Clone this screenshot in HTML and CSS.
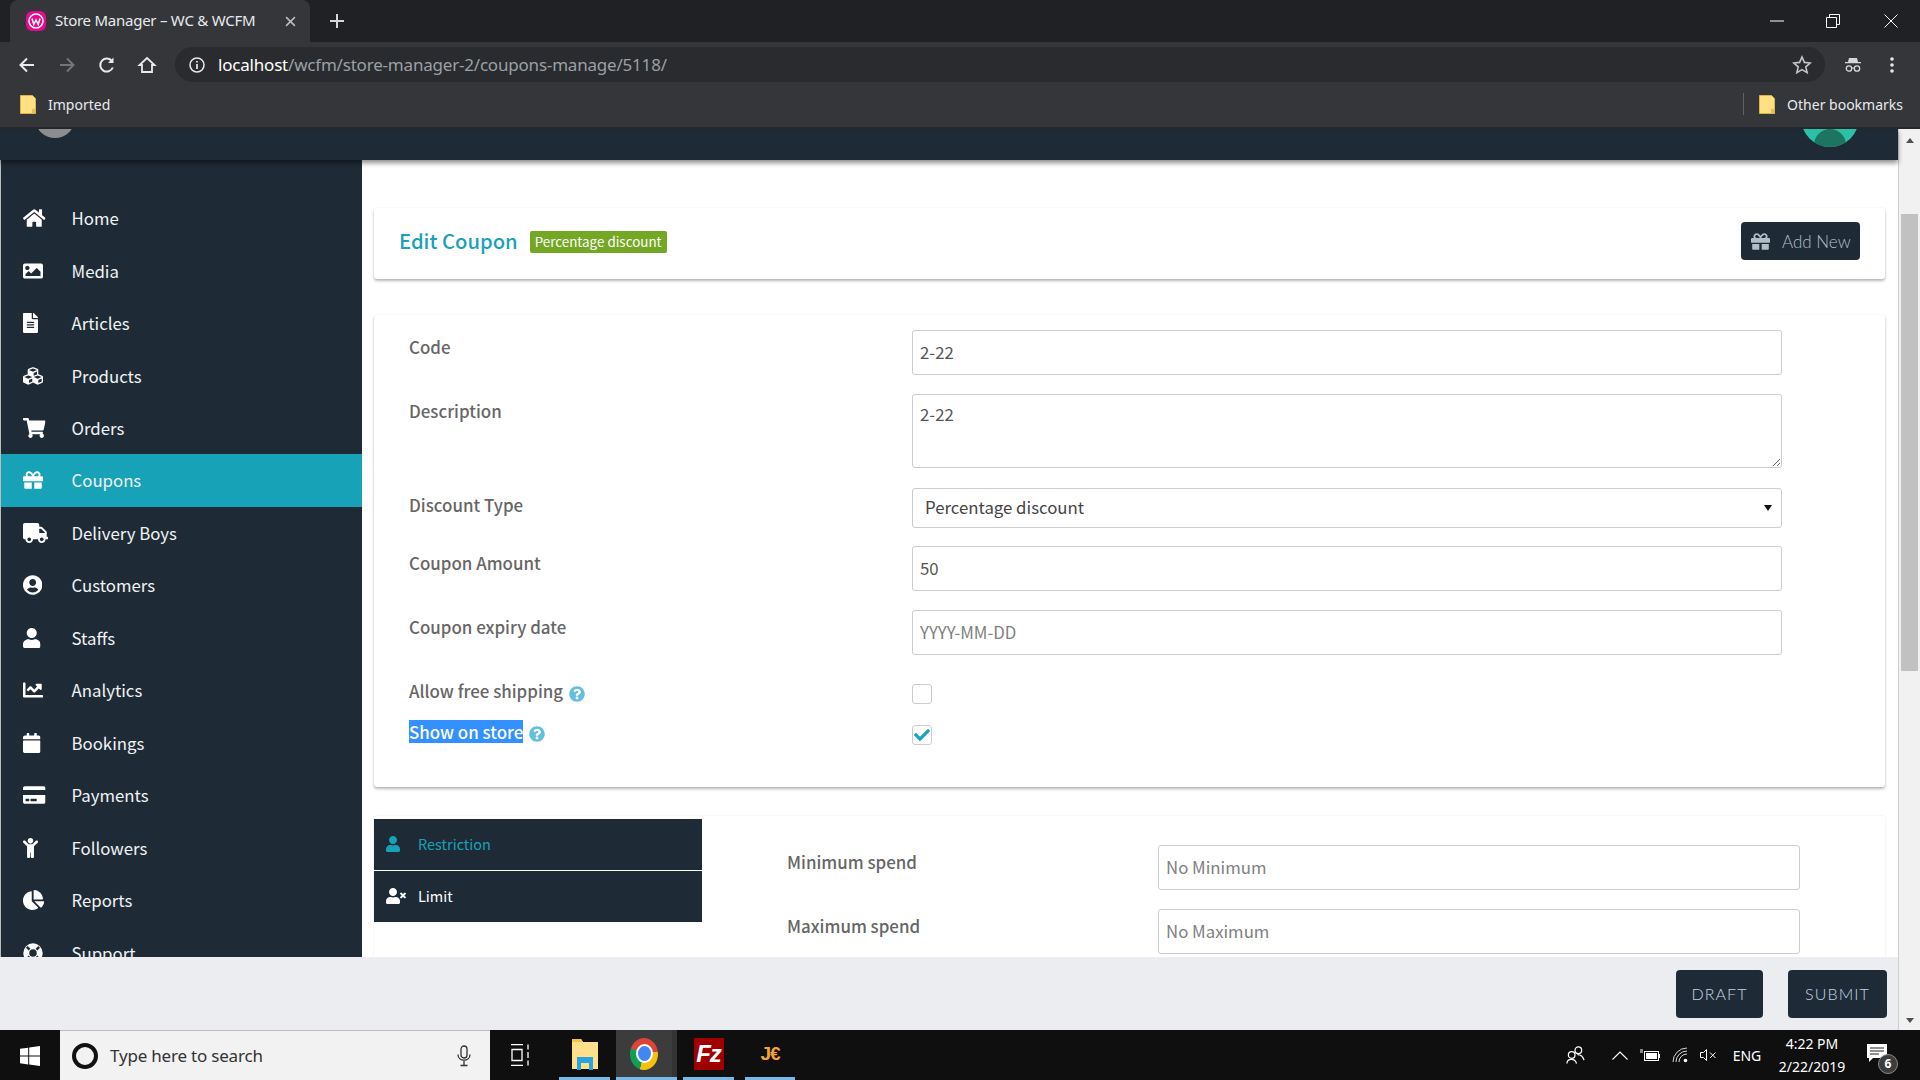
FILE: index.html
```html
<!DOCTYPE html>
<html lang="en">
<head>
<meta charset="utf-8">
<title>Store Manager – WC &amp; WCFM</title>
<link rel="stylesheet" href="styles.css">
</head>
<body>
<svg class="sprite" xmlns="http://www.w3.org/2000/svg">
<symbol id="i-home" viewBox="0 0 576 512"><path d="M280.37 148.26L96 300.11V464a16 16 0 0 0 16 16l112.06-.29a16 16 0 0 0 15.92-16V368a16 16 0 0 1 16-16h64a16 16 0 0 1 16 16v95.64a16 16 0 0 0 16 16.05L464 480a16 16 0 0 0 16-16V300L295.67 148.26a12.19 12.19 0 0 0-15.3 0zM571.6 251.47L488 182.56V44.05a12 12 0 0 0-12-12h-56a12 12 0 0 0-12 12v72.61L318.47 43a48 48 0 0 0-61 0L4.34 251.47a12 12 0 0 0-1.6 16.9l25.5 31A12 12 0 0 0 45.15 301l235.22-193.74a12.19 12.19 0 0 1 15.3 0L530.9 301a12 12 0 0 0 16.9-1.6l25.5-31a12 12 0 0 0-1.7-16.93z"/></symbol>
<symbol id="i-image" viewBox="0 0 512 512"><path d="M464 448H48c-26.51 0-48-21.49-48-48V112c0-26.51 21.49-48 48-48h416c26.51 0 48 21.49 48 48v288c0 26.51-21.49 48-48 48zM112 120c-30.928 0-56 25.072-56 56s25.072 56 56 56 56-25.072 56-56-25.072-56-56-56zM64 384h384V272l-87.515-87.515c-4.686-4.686-12.284-4.686-16.971 0L208 320l-55.515-55.515c-4.686-4.686-12.284-4.686-16.971 0L64 336v48z"/></symbol>
<symbol id="i-file" viewBox="0 0 384 512"><path d="M224 136V0H24C10.7 0 0 10.7 0 24v464c0 13.3 10.7 24 24 24h336c13.3 0 24-10.7 24-24V160H248c-13.2 0-24-10.8-24-24zm64 236c0 6.6-5.4 12-12 12H108c-6.6 0-12-5.4-12-12v-8c0-6.6 5.4-12 12-12h168c6.6 0 12 5.4 12 12v8zm0-64c0 6.6-5.4 12-12 12H108c-6.6 0-12-5.4-12-12v-8c0-6.6 5.4-12 12-12h168c6.6 0 12 5.4 12 12v8zm0-72v8c0 6.6-5.4 12-12 12H108c-6.6 0-12-5.4-12-12v-8c0-6.6 5.4-12 12-12h168c6.6 0 12 5.4 12 12zm96-114.1v6.1H256V0h6.1c6.4 0 12.5 2.5 17 7l97.9 98c4.5 4.5 7 10.6 7 16.9z"/></symbol>
<symbol id="i-cubes" viewBox="0 0 512 512"><path d="M488.6 250.2L392 214V105.5c0-15-9.3-28.4-23.4-33.7l-100-37.5c-8.1-3.1-17.1-3.1-25.3 0l-100 37.5c-14.1 5.3-23.4 18.7-23.4 33.7V214l-96.6 36.2C9.3 255.5 0 268.9 0 283.9V394c0 13.6 7.7 26.1 19.9 32.2l100 50c10.1 5.1 22.1 5.1 32.2 0l103.9-52 103.9 52c10.1 5.1 22.1 5.1 32.2 0l100-50c12.2-6.1 19.9-18.6 19.9-32.2V283.9c0-15-9.3-28.4-23.4-33.7zM358 214.8l-85 31.9v-68.2l85-37v73.3zM154 104.1l102-38.2 102 38.2v.6l-102 41.4-102-41.4v-.6zm84 291.1l-85 42.5v-79.1l85-38.8v75.4zm0-112l-102 41.4-102-41.4v-.6l102-38.2 102 38.2v.6zm240 112l-85 42.5v-79.1l85-38.8v75.4zm0-112l-102 41.4-102-41.4v-.6l102-38.2 102 38.2v.6z"/></symbol>
<symbol id="i-cart" viewBox="0 0 576 512"><path d="M528.12 301.319l47.273-208C578.806 78.301 567.391 64 551.99 64H159.208l-9.166-44.81C147.758 8.021 137.93 0 126.529 0H24C10.745 0 0 10.745 0 24v16c0 13.255 10.745 24 24 24h69.883l70.248 343.435C147.325 417.1 136 435.222 136 456c0 30.928 25.072 56 56 56s56-25.072 56-56c0-15.674-6.447-29.835-16.824-40h209.647C430.447 426.165 424 440.326 424 456c0 30.928 25.072 56 56 56s56-25.072 56-56c0-22.172-12.888-41.332-31.579-50.405l5.517-24.276c3.413-15.018-8.002-29.319-23.403-29.319H218.117l-6.545-32h293.145c11.206 0 20.92-7.754 23.403-18.681z"/></symbol>
<symbol id="i-gift" viewBox="0 0 512 512"><path d="M32 448c0 17.7 14.3 32 32 32h160V320H32v128zm256 32h160c17.7 0 32-14.3 32-32V320H288v160zm192-320h-42.1c6.2-12.1 10.1-25.5 10.1-40 0-48.5-39.5-88-88-88-41.6 0-68.5 21.3-103 68.3-34.5-47-61.4-68.3-103-68.3-48.5 0-88 39.5-88 88 0 14.5 3.8 27.9 10.1 40H32c-17.7 0-32 14.3-32 32v80c0 8.8 7.2 16 16 16h480c8.8 0 16-7.2 16-16v-80c0-17.7-14.3-32-32-32zm-326.1 0c-22.1 0-40-17.9-40-40s17.9-40 40-40c19.9 0 34.6 3.3 86.1 80h-86.1zm206.1 0h-86.1c51.4-76.5 65.7-80 86.1-80 22.1 0 40 17.9 40 40s-17.9 40-40 40z"/></symbol>
<symbol id="i-truck" viewBox="0 0 640 512"><path d="M624 352h-16V243.9c0-12.7-5.1-24.9-14.1-33.9L494 110.1c-9-9-21.2-14.1-33.9-14.1H416V48c0-26.5-21.5-48-48-48H48C21.5 0 0 21.5 0 48v320c0 26.5 21.5 48 48 48h16c0 53 43 96 96 96s96-43 96-96h128c0 53 43 96 96 96s96-43 96-96h48c8.8 0 16-7.2 16-16v-32c0-8.8-7.2-16-16-16zM160 464c-26.5 0-48-21.5-48-48s21.5-48 48-48 48 21.5 48 48-21.5 48-48 48zm320 0c-26.5 0-48-21.5-48-48s21.5-48 48-48 48 21.5 48 48-21.5 48-48 48zm80-208H416V144h44.1l99.9 99.9V256z"/></symbol>
<symbol id="i-ucircle" viewBox="0 0 496 512"><path d="M248 8C111 8 0 119 0 256s111 248 248 248 248-111 248-248S385 8 248 8zm0 96c48.6 0 88 39.4 88 88s-39.4 88-88 88-88-39.4-88-88 39.4-88 88-88zm0 344c-58.7 0-111.3-26.6-146.5-68.2 18.8-35.4 55.6-59.8 98.5-59.8 2.4 0 4.8.4 7.1 1.1 13 4.2 26.6 6.9 40.9 6.9 14.3 0 28-2.7 40.9-6.9 2.3-.7 4.7-1.1 7.1-1.1 42.9 0 79.7 24.4 98.5 59.8C359.3 421.4 306.7 448 248 448z"/></symbol>
<symbol id="i-user" viewBox="0 0 448 512"><path d="M224 256c70.7 0 128-57.3 128-128S294.7 0 224 0 96 57.3 96 128s57.3 128 128 128zm89.6 32h-16.7c-22.2 10.2-46.9 16-72.9 16s-50.6-5.8-72.9-16h-16.7C60.2 288 0 348.2 0 422.4V464c0 26.5 21.5 48 48 48h352c26.5 0 48-21.5 48-48v-41.6c0-74.2-60.2-134.4-134.4-134.4z"/></symbol>
<symbol id="i-chart" viewBox="0 0 512 512"><path d="M496 384H64V80c0-8.84-7.16-16-16-16H16C7.16 64 0 71.16 0 80v336c0 17.67 14.33 32 32 32h464c8.84 0 16-7.16 16-16v-32c0-8.84-7.16-16-16-16zM464 96H345.94c-21.38 0-32.09 25.85-16.97 40.97l32.4 32.4L288 242.75l-73.37-73.37c-12.5-12.5-32.76-12.5-45.25 0l-68.69 68.69c-6.25 6.25-6.25 16.38 0 22.63l22.62 22.62c6.25 6.25 16.38 6.25 22.63 0L192 237.25l73.37 73.37c12.5 12.5 32.76 12.5 45.25 0l96-96 32.4 32.4c15.12 15.12 40.97 4.41 40.97-16.97V112c.01-8.84-7.15-16-15.99-16z"/></symbol>
<symbol id="i-cal" viewBox="0 0 448 512"><path d="M12 192h424c6.6 0 12 5.4 12 12v260c0 26.5-21.5 48-48 48H48c-26.5 0-48-21.5-48-48V204c0-6.6 5.4-12 12-12zm436-44v-36c0-26.5-21.5-48-48-48h-48V12c0-6.6-5.4-12-12-12h-40c-6.6 0-12 5.4-12 12v52H160V12c0-6.6-5.4-12-12-12h-40c-6.6 0-12 5.4-12 12v52H48C21.5 64 0 85.5 0 112v36c0 6.6 5.4 12 12 12h424c6.6 0 12-5.4 12-12z"/></symbol>
<symbol id="i-card" viewBox="0 0 576 512"><path d="M0 432c0 26.5 21.5 48 48 48h480c26.5 0 48-21.5 48-48V256H0v176zm192-68c0-6.6 5.4-12 12-12h136c6.6 0 12 5.4 12 12v40c0 6.6-5.4 12-12 12H204c-6.6 0-12-5.4-12-12v-40zm-128 0c0-6.6 5.4-12 12-12h72c6.6 0 12 5.4 12 12v40c0 6.6-5.4 12-12 12H76c-6.6 0-12-5.4-12-12v-40zM576 80v48H0V80c0-26.5 21.5-48 48-48h480c26.5 0 48 21.5 48 48z"/></symbol>
<symbol id="i-child" viewBox="0 0 384 512"><path d="M120 72c0-39.765 32.235-72 72-72s72 32.235 72 72c0 39.764-32.235 72-72 72s-72-32.236-72-72zm254.627 1.373c-12.496-12.497-32.758-12.497-45.254 0L242.745 160H141.254L54.627 73.373c-12.496-12.497-32.758-12.497-45.254 0-12.497 12.497-12.497 32.758 0 45.255L104 213.254V480c0 17.673 14.327 32 32 32h16c17.673 0 32-14.327 32-32V368h16v112c0 17.673 14.327 32 32 32h16c17.673 0 32-14.327 32-32V213.254l94.627-94.627c12.497-12.497 12.497-32.757 0-45.254z"/></symbol>
<symbol id="i-pie" viewBox="0 0 544 512"><path d="M527.79 288H290.5l158.03 158.03c6.04 6.04 15.98 6.53 22.19.68 38.7-36.46 65.32-85.61 73.13-140.86 1.34-9.46-6.51-17.85-16.06-17.85zm-15.83-64.8C503.72 103.74 408.26 8.28 288.8.04 279.68-.59 272 7.1 272 16.24V240h223.77c9.14 0 16.82-7.68 16.19-16.8zM224 288V50.71c0-9.55-8.39-17.4-17.84-16.06C86.99 51.49-4.1 155.6.14 280.37 4.5 408.51 114.83 513.59 243.03 511.98c50.4-.63 96.97-16.87 135.26-44.03 7.9-5.6 8.42-17.23 1.57-24.08L224 288z"/></symbol>
<symbol id="i-ring" viewBox="0 0 512 512"><path fill-rule="evenodd" d="M256 8a248 248 0 1 1 0 496 248 248 0 0 1 0-496zM256 160a96 96 0 1 0 0 192 96 96 0 0 0 0-192zM120 76l-44 44 70 70 44-44zM392 76l-70 70 44 44 70-70zM146 322l-70 70 44 44 70-70zM366 322l-44 44 70 70 44-44z"/></symbol>
<symbol id="i-utimes" viewBox="0 0 640 512"><path d="M589.6 240l45.6-45.6c6.3-6.3 6.3-16.5 0-22.8l-22.8-22.8c-6.3-6.3-16.5-6.3-22.8 0L544 194.4l-45.6-45.6c-6.3-6.3-16.5-6.3-22.8 0l-22.8 22.8c-6.3 6.3-6.3 16.5 0 22.8l45.6 45.6-45.6 45.6c-6.3 6.3-6.3 16.5 0 22.8l22.8 22.8c6.3 6.3 16.5 6.3 22.8 0l45.6-45.6 45.6 45.6c6.3 6.3 16.5 6.3 22.8 0l22.8-22.8c6.3-6.3 6.3-16.5 0-22.8L589.6 240zM224 256c70.7 0 128-57.3 128-128S294.7 0 224 0 96 57.3 96 128s57.3 128 128 128zm89.6 32h-16.7c-22.2 10.2-46.9 16-72.9 16s-50.6-5.8-72.9-16h-16.7C60.2 288 0 348.2 0 422.4V464c0 26.5 21.5 48 48 48h352c26.5 0 48-21.5 48-48v-41.6c0-74.2-60.2-134.4-134.4-134.4z"/></symbol>
<symbol id="i-help" viewBox="0 0 512 512"><path d="M504 256c0 136.997-111.043 248-248 248S8 392.997 8 256C8 119.083 119.043 8 256 8s248 111.083 248 248zM262.655 90c-54.497 0-89.255 22.957-116.549 63.758-3.536 5.286-2.353 12.415 2.715 16.258l34.699 26.31c5.205 3.947 12.621 3.008 16.665-2.122 17.864-22.658 30.113-35.797 57.303-35.797 20.429 0 45.698 13.148 45.698 32.958 0 14.976-12.363 22.667-32.534 33.976C247.128 238.528 216 254.941 216 296v4c0 6.627 5.373 12 12 12h56c6.627 0 12-5.373 12-12v-1.333c0-28.462 83.186-29.647 83.186-106.667 0-58.002-60.165-102-116.531-102zM256 338c-25.365 0-46 20.635-46 46 0 25.364 20.635 46 46 46s46-20.636 46-46c0-25.365-20.635-46-46-46z"/></symbol>
<symbol id="i-check" viewBox="0 0 512 512"><path d="M173.898 439.404l-166.4-166.4c-9.997-9.997-9.997-26.206 0-36.204l36.203-36.204c9.997-9.998 26.207-9.998 36.204 0L192 312.69 432.095 72.596c9.997-9.997 26.207-9.997 36.204 0l36.203 36.204c9.997 9.997 9.997 26.206 0 36.204l-294.4 294.401c-9.998 9.997-26.207 9.997-36.204-.001z"/></symbol>
<symbol id="i-folder" viewBox="0 0 16 19"><path d="M.5.5h12l3 3v15H.5z" fill="#ffe082" stroke="#d9b44a"/><path d="M12 14h3.500v4.500H12z" fill="#e6bf55"/></symbol>
</svg>

<header class="tabstrip">
  <div class="tab">
    <svg class="favicon" viewBox="0 0 20 20"><rect width="20" height="20" rx="6" fill="#e6098f"/><circle cx="10" cy="10" r="7" fill="none" stroke="#fff" stroke-width="1.500"/><path d="M6 7.500l1.800 6 2.200-4.500 2.200 4.500 1.800-6" fill="none" stroke="#fff" stroke-width="1.500"/></svg>
    <span class="tab-title">Store Manager – WC &amp; WCFM</span>
    <svg class="tab-close" viewBox="0 0 10 10"><path d="M1 1l8 8M9 1l-8 8" stroke="#b9bcc0" stroke-width="1.400"/></svg>
  </div>
  <svg class="newtab" viewBox="0 0 16 16"><path d="M8 1v14M1 8h14" stroke="#d5d7da" stroke-width="2"/></svg>
  <div class="winctl">
    <svg class="win-min" viewBox="0 0 14 14"><path d="M0 7h14" stroke="#fff"/></svg>
    <svg viewBox="0 0 14 14"><path d="M.5 3.500h10v10H.5zM3.500 3.500v-3h10v10h-3" fill="none" stroke="#fff"/></svg>
    <svg viewBox="0 0 14 14"><path d="M.5.5l13 13M13.500.5l-13 13" stroke="#fff"/></svg>
  </div>
</header>

<nav class="toolbar">
  <svg class="tb-ic" viewBox="0 0 20 20"><path d="M17 10H4M10 3.500L3.500 10l6.500 6.500" fill="none" stroke="#e8eaed" stroke-width="2"/></svg>
  <svg class="tb-ic" viewBox="0 0 20 20"><path d="M3 10h13M10 3.500l6.500 6.500-6.500 6.500" fill="none" stroke="#72757a" stroke-width="2"/></svg>
  <svg class="tb-ic" viewBox="0 0 20 20"><path d="M15.800 12.500A6.500 6.500 0 1 1 15 6.200" fill="none" stroke="#e8eaed" stroke-width="2"/><path d="M16.500 2.500V8H11z" fill="#e8eaed"/></svg>
  <svg class="tb-ic" viewBox="0 0 20 20"><path d="M10 3l7.500 7H15v7H5v-7H2.500z" fill="none" stroke="#e8eaed" stroke-width="1.800"/></svg>
  <div class="omnibox">
    <svg class="info" viewBox="0 0 16 16"><circle cx="8" cy="8" r="7" fill="none" stroke="#e8eaed" stroke-width="1.500"/><path d="M8 7v5M8 4v1.600" stroke="#e8eaed" stroke-width="1.700"/></svg>
    <span class="url"><span class="host">localhost</span>/wcfm/store-manager-2/coupons-manage/5118/</span>
    <svg class="star" viewBox="0 0 20 20"><path d="M10 2l2.400 5.400 5.800.6-4.400 3.900 1.300 5.700-5.100-3-5.100 3 1.300-5.700L1.800 8l5.800-.6z" fill="none" stroke="#c4c7ca" stroke-width="1.600"/></svg>
  </div>
  <svg class="incog" viewBox="0 0 18 16"><path d="M5 1h8l1 4h3v1.300H1V5h3z" fill="#d5d7da"/><circle cx="5" cy="11.500" r="2.700" fill="none" stroke="#d5d7da" stroke-width="1.300"/><circle cx="13" cy="11.500" r="2.700" fill="none" stroke="#d5d7da" stroke-width="1.300"/><path d="M7.700 11h2.600" stroke="#d5d7da"/></svg>
  <svg class="dots" viewBox="0 0 4 16"><circle cx="2" cy="2" r="1.800" fill="#e8eaed"/><circle cx="2" cy="8" r="1.800" fill="#e8eaed"/><circle cx="2" cy="14" r="1.800" fill="#e8eaed"/></svg>
</nav>

<nav class="bookmarks">
  <svg class="bm-folder"><use href="#i-folder"/></svg>
  <span class="bm-text">Imported</span>
  <span class="bm-sep"></span>
  <svg class="bm-folder"><use href="#i-folder"/></svg>
  <span class="bm-text">Other bookmarks</span>
</nav>

<div class="viewport">
  <div class="page">
    <div class="topbar">
      <span class="avatar avatar-left"></span>
      <span class="avatar avatar-right"><span class="avatar-figure"></span></span>
    </div>
    <div class="workspace">
      <aside class="sidebar">
        <a class="nav-item"><span class="nav-ic"><svg viewBox="0 0 576 512"><use href="#i-home"/></svg></span>Home</a>
        <a class="nav-item"><span class="nav-ic"><svg viewBox="0 0 512 512"><use href="#i-image"/></svg></span>Media</a>
        <a class="nav-item"><span class="nav-ic"><svg viewBox="0 0 384 512"><use href="#i-file"/></svg></span>Articles</a>
        <a class="nav-item"><span class="nav-ic"><svg viewBox="0 0 512 512"><use href="#i-cubes"/></svg></span>Products</a>
        <a class="nav-item"><span class="nav-ic"><svg viewBox="0 0 576 512"><use href="#i-cart"/></svg></span>Orders</a>
        <a class="nav-item active"><span class="nav-ic"><svg viewBox="0 0 512 512"><use href="#i-gift"/></svg></span>Coupons</a>
        <a class="nav-item"><span class="nav-ic"><svg viewBox="0 0 640 512"><use href="#i-truck"/></svg></span>Delivery Boys</a>
        <a class="nav-item"><span class="nav-ic"><svg viewBox="0 0 496 512"><use href="#i-ucircle"/></svg></span>Customers</a>
        <a class="nav-item"><span class="nav-ic"><svg viewBox="0 0 448 512"><use href="#i-user"/></svg></span>Staffs</a>
        <a class="nav-item"><span class="nav-ic"><svg viewBox="0 0 512 512"><use href="#i-chart"/></svg></span>Analytics</a>
        <a class="nav-item"><span class="nav-ic"><svg viewBox="0 0 448 512"><use href="#i-cal"/></svg></span>Bookings</a>
        <a class="nav-item"><span class="nav-ic"><svg viewBox="0 0 576 512"><use href="#i-card"/></svg></span>Payments</a>
        <a class="nav-item"><span class="nav-ic"><svg viewBox="0 0 384 512"><use href="#i-child"/></svg></span>Followers</a>
        <a class="nav-item"><span class="nav-ic"><svg viewBox="0 0 544 512"><use href="#i-pie"/></svg></span>Reports</a>
        <a class="nav-item"><span class="nav-ic"><svg viewBox="0 0 512 512"><use href="#i-ring"/></svg></span>Support</a>
      </aside>
      <main class="main">
        <section class="card head-card">
          <div class="head-left">
            <h1 class="title">Edit Coupon</h1>
            <span class="badge">Percentage discount</span>
          </div>
          <a class="btn-add"><svg viewBox="0 0 512 512"><use href="#i-gift"/></svg>Add New</a>
        </section>
        <section class="card form-card">
          <div class="row"><label class="lbl">Code</label><input class="field" type="text" value="2-22"></div>
          <div class="row mt19"><label class="lbl">Description</label><textarea class="field area">2-22</textarea></div>
          <div class="row mt20"><label class="lbl">Discount Type</label><span class="sel-wrap"><select class="field sel"><option>Percentage discount</option></select></span></div>
          <div class="row mt18"><label class="lbl">Coupon Amount</label><input class="field" type="text" value="50"></div>
          <div class="row mt19"><label class="lbl">Coupon expiry date</label><input class="field" type="text" placeholder="YYYY-MM-DD"></div>
          <div class="row row-check mt29"><label class="lbl lbl-check lift3">Allow free shipping<svg class="help" viewBox="0 0 512 512"><use href="#i-help"/></svg></label><span class="checkbox"></span></div>
          <div class="row row-check mt21"><label class="lbl lbl-check lift4"><span class="selected">Show on store</span><svg class="help" viewBox="0 0 512 512"><use href="#i-help"/></svg></label><span class="checkbox"><svg viewBox="0 0 512 512"><use href="#i-check"/></svg></span></div>
        </section>
        <section class="card tab-card">
          <div class="tabs">
            <a class="tab-link on"><span class="tab-ic"><svg viewBox="0 0 448 512"><use href="#i-user"/></svg></span>Restriction</a>
            <a class="tab-link"><span class="tab-ic"><svg viewBox="0 0 640 512"><use href="#i-utimes"/></svg></span>Limit</a>
          </div>
          <div class="tab-body">
            <div class="row2"><label class="lbl lbl2">Minimum spend</label><input class="field field2" type="text" placeholder="No Minimum"></div>
            <div class="row2"><label class="lbl lbl2">Maximum spend</label><input class="field field2" type="text" placeholder="No Maximum"></div>
          </div>
        </section>
      </main>
    </div>
    <footer class="actions">
      <a class="btn-act btn-draft">DRAFT</a>
      <a class="btn-act btn-submit">SUBMIT</a>
    </footer>
  </div>
  <div class="scrollbar">
    <span class="arrow-up"></span>
    <span class="thumb"></span>
    <span class="arrow-down"></span>
  </div>
</div>

<footer class="taskbar">
  <div class="start">
    <svg viewBox="0 0 20 20"><path d="M0 2.800l8.200-1.100v7.900H0zM9.200 1.500L20 0v9.600H9.200zM0 10.600h8.200v7.900L0 17.200zM9.200 10.600H20V20L9.200 18.500z" fill="#fff"/></svg>
  </div>
  <div class="search">
    <span class="cortana"></span>
    <span class="search-text">Type here to search</span>
    <svg class="mic" viewBox="0 0 14 22"><rect x="4" y="1" width="6" height="12" rx="3" fill="none" stroke="#333" stroke-width="1.300"/><path d="M1 9.500c0 7.500 12 7.500 12 0M7 16v4M3.500 20.500h7" fill="none" stroke="#333" stroke-width="1.300"/></svg>
  </div>
  <div class="taskview">
    <svg viewBox="0 0 22 22"><path d="M1 .5h12M1 21.500h12M2 5.500h10v11H2zM18 .5v5M18 8v6M18 16.500v5" fill="none" stroke="#fff" stroke-width="1.300"/></svg>
  </div>
  <div class="app app-explorer">
    <svg viewBox="0 0 28 32"><path d="M1 1h9l2 3h15v27H1z" fill="#ffe08a"/><path d="M1 1h9l2 3H1z" fill="#f4c542"/><path d="M6 19h16v13h-4v-7h-8v7H6z" fill="#2aa4e0"/></svg>
  </div>
  <div class="app app-chrome"><span class="chrome-logo"></span></div>
  <div class="app app-fz"><span class="fz-logo">Fz</span></div>
  <div class="app app-je"><span class="je-logo">J€</span></div>
  <div class="tray">
    <span class="slot slot-people"><svg viewBox="0 0 20 20"><circle cx="6" cy="10" r="3.500" fill="none" stroke="#fff" stroke-width="1.300"/><circle cx="13" cy="5" r="3.500" fill="none" stroke="#fff" stroke-width="1.300"/><path d="M1 19c0-6 9-6 10 0M12 9.500c3 0 6 2 7 6" fill="none" stroke="#fff" stroke-width="1.300"/></svg></span>
    <span class="slot slot-chev"><svg viewBox="0 0 16 9"><path d="M.5 8.500L8 1l7.500 7.500" fill="none" stroke="#fff" stroke-width="1.200"/></svg></span>
    <span class="slot slot-batt"><svg viewBox="0 0 20 12"><path d="M0 1h3M0 3h3" stroke="#fff"/><rect x="4.500" y="2.500" width="14" height="9" fill="none" stroke="#fff"/><rect x="6" y="4" width="11" height="6" fill="#fff"/><path d="M19 5h1v4h-1z" fill="#fff"/></svg></span>
    <span class="slot slot-wifi"><svg viewBox="0 0 16 16"><path d="M1 15a14 14 0 0 1 14-14M4 15a11 11 0 0 1 11-11M7 15a8 8 0 0 1 8-8" fill="none" stroke="#d8d8d8"/><circle cx="13.500" cy="13.500" r="1.800" fill="#fff"/></svg></span>
    <span class="slot slot-vol"><svg viewBox="0 0 18 12"><path d="M.5 3.500h3l3-3v11l-3-3h-3z" fill="none" stroke="#fff"/><path d="M10 3.500l5.500 5.500M15.500 3.500L10 9" stroke="#fff"/></svg></span>
    <span class="slot slot-eng">ENG</span>
    <span class="slot slot-clock"><span>4:22 PM</span><span>2/22/2019</span></span>
    <span class="slot slot-note">
      <svg viewBox="0 0 20 18"><path d="M0 0h20v14H6l-4 4v-4H0z" fill="#fff"/><path d="M3 4h14M3 7h14M3 10h9" stroke="#222"/></svg>
      <span class="note-badge">6</span>
    </span>
  </div>
</footer>
</body>
</html>
```

FILE: styles.css
```css
* { box-sizing: border-box; }
html, body { margin: 0; padding: 0; height: 100%; overflow: hidden; }
body {
  display: flex;
  flex-direction: column;
  width: 1920px;
  height: 1080px;
  font-family: "Noto Sans CJK SC", "Noto Sans", sans-serif;
  background: #fff;
}
.sprite { display: none; }
a { color: inherit; text-decoration: none; }

/* browser chrome */
.tabstrip {
  height: 42px;
  flex: none;
  background: #202124;
  display: flex;
  align-items: flex-end;
  padding-left: 10px;
  font-family: "Noto Sans", sans-serif;
}
.tab {
  width: 300px;
  height: 42px;
  background: #35363a;
  border-radius: 8px 8px 0 0;
  display: flex;
  align-items: center;
  padding-left: 16px;
}
.favicon { width: 20px; height: 20px; flex: none; }
.tab-title { margin-left: 9px; color: #e8eaed; font-size: 15px; letter-spacing: -.25px; width: 230px; white-space: nowrap; margin-top: -2px; }
.tab-close { width: 11px; height: 11px; }
.newtab { width: 16px; height: 16px; margin: 0 0 13px 19px; }
.winctl { margin-left: auto; display: flex; align-self: flex-start; gap: 44px; padding: 14px 22px 0 0; }
.winctl svg { width: 14px; height: 14px; }
.winctl .win-min { margin-right: -2px; }

.toolbar {
  height: 40px;
  flex: none;
  background: #35363a;
  display: flex;
  align-items: flex-start;
  font-family: "Noto Sans", sans-serif;
  padding: 5px 0 0 17px;
}
.tb-ic { width: 20px; height: 20px; margin: 8px 20px 0 0; flex: none; }
.omnibox {
  margin-left: -2px;
  width: 1650px;
  height: 35px;
  background: #292b2e;
  border-radius: 18px;
  display: flex;
  align-items: center;
  padding-left: 14px;
}
.info { width: 16px; height: 16px; flex: none; }
.url { margin-left: 13px; font-size: 17px; color: #9aa0a6; letter-spacing: -.2px; white-space: nowrap; }
.host { color: #fff; }
.star { width: 20px; height: 20px; margin-left: auto; margin-right: 13px; }
.incog { width: 18px; height: 16px; margin: 10px 0 0 19px; }
.dots { width: 4px; height: 16px; margin: 10px 0 0 28px; }

.bookmarks {
  height: 47px;
  flex: none;
  background: #35363a;
  border-bottom: 2px solid #27282b;
  display: flex;
  align-items: center;
  padding: 0 17px 1px 20px;
  font-family: "Noto Sans", sans-serif;
  color: #e8eaed;
  font-size: 14px;
}
.bm-folder { width: 16px; height: 19px; flex: none; }
.bm-text { margin-left: 12px; white-space: nowrap; }
.bm-sep { width: 1px; height: 22px; background: #5f6368; margin: 0 15px 0 auto; }

/* page */
.viewport { flex: 1; min-height: 0; display: flex; }
.page { width: 1898px; display: flex; flex-direction: column; min-height: 0; }
.topbar {
  height: 31px;
  flex: none;
  background: #1e2b37;
  display: flex;
  justify-content: space-between;
  align-items: flex-end;
  overflow: hidden;
  padding: 0 39px 0 35px;
  box-shadow: 0 3px 5px rgba(0,0,0,.45);
  position: relative;
  z-index: 2;
}
.avatar { display: block; border-radius: 50%; flex: none; position: relative; overflow: hidden; }
.avatar-left { width: 40px; height: 40px; background: #8b8d8f; margin-bottom: 22px; }
.avatar-right { width: 58px; height: 58px; background: #2ac1a6; margin-bottom: 13px; }
.avatar-figure { display: block; position: absolute; left: 13px; bottom: -14px; width: 32px; height: 32px; background: #1b7560; border-radius: 50%; }

.workspace { flex: 1; min-height: 0; display: flex; border-left: 1px solid #bcbcbc; }
.sidebar {
  width: 361px;
  flex: none;
  background: #1e2b37;
  padding-top: 32px;
  overflow: hidden;
  color: #f1f3f4;
  font-size: 16.8px;
}
.nav-item { display: flex; align-items: center; height: 52.46px; padding-left: 22px; white-space: nowrap; }
.nav-item.active { background: #17a2b8; }
.nav-ic { width: 48.5px; flex: none; display: flex; align-items: center; }
.nav-ic svg { height: 20px; width: auto; fill: #fff; }
.main { flex: 1; min-width: 0; overflow: hidden; padding: 48px 13px 0 12px; background: #fff; }
.card { background: #fff; border-radius: 3px; box-shadow: 0 2px 3px rgba(0,0,0,.28), 0 0 2px rgba(0,0,0,.06); }

.head-card { height: 71px; display: flex; align-items: center; justify-content: space-between; padding: 0 25px 0 25px; }
.head-left { display: flex; align-items: center; margin-bottom: 6px; }
.title { margin: 0; font-size: 20.2px; font-weight: 500; color: #17a2b8; line-height: 30px; }
.badge { margin: 2px 0 0 12px; background: #73a724; color: #fff; font-size: 13.4px; height: 22px; line-height: 21px; padding: 0 5px; border-radius: 2px; white-space: nowrap; }
.btn-add { width: 119px; height: 38px; margin-bottom: 5px; background: #1e2b37; border-radius: 4px; color: #b0bec5; display: flex; align-items: center; padding-left: 10px; font-family: Lato, sans-serif; font-size: 17px; font-weight: 300; white-space: nowrap; }
.btn-add svg { width: 19px; height: 19px; fill: #b0bec5; margin-right: 12px; flex: none; }

.form-card { height: 472px; margin-top: 36px; padding: 15px 0 0 35px; }
.row { display: flex; align-items: flex-start; }
.row-check { align-items: center; height: 20px; }
.mt18 { margin-top: 18px; }
.mt19 { margin-top: 19px; }
.mt20 { margin-top: 20px; }
.mt21 { margin-top: 21px; }
.mt29 { margin-top: 29px; }
.lbl { width: 503px; flex: none; font-size: 16.9px; font-weight: 500; color: #666; line-height: 34px; white-space: nowrap; }
.lbl-check { display: flex; align-items: center; line-height: 16px; height: 20px; }
.lift3 { margin-bottom: 6px; }
.lift4 { margin-bottom: 8px; }
.selected { background: #3390ff; color: #fff; line-height: 23px; display: block; }
.help { width: 16px; height: 16px; fill: #62bfdf; margin: 6px 0 0 6px; flex: none; }
.field { width: 870px; height: 45px; border: 1px solid #ccc; border-radius: 3px; padding: 0 7px 2px; font-family: inherit; font-size: 16.8px; color: #555; background: #fff; display: block; outline: none; }
.field::placeholder { color: #808080; }
.area { height: 74px; padding: 8px 7px; line-height: 1.4; resize: vertical; }
.sel-wrap { display: block; position: relative; }
.sel-wrap::after { content: ""; position: absolute; right: 10px; top: 17px; border: 4px solid transparent; border-bottom: 0; border-top: 6px solid #111; }
.sel { height: 40px; padding: 0 8px 2px 12px; color: #444; appearance: none; -webkit-appearance: none; }
.checkbox { width: 20px; height: 20px; border: 1px solid #ccc; border-radius: 3px; display: flex; align-items: center; justify-content: center; background: #fff; }
.checkbox svg { width: 16px; height: 16px; fill: #17a2b8; }

.tab-card { margin-top: 29px; height: 300px; display: flex; padding-top: 3px; align-items: flex-start; box-shadow: 0 0 2px rgba(0,0,0,.12); }
.tabs { width: 328px; flex: none; display: flex; flex-direction: column; gap: 1px; }
.tab-link { height: 51px; background: #1e2b37; color: #fff; display: flex; align-items: center; padding-left: 12px; font-size: 14.5px; padding-bottom: 2px; }
.tab-link.on { color: #17a2b8; }
.tab-ic { width: 32px; flex: none; display: flex; }
.tab-ic svg { height: 16px; width: auto; fill: currentColor; }
.tab-body { padding: 26px 0 0 85px; display: flex; flex-direction: column; gap: 19px; }
.row2 { display: flex; }
.lbl2 { width: 371px; }
.field2 { width: 642px; }

.actions { height: 73px; flex: none; background: #ecedf1; display: flex; justify-content: flex-end; gap: 25px; padding: 13px 11px 0 0; position: relative; z-index: 2; }
.btn-act { height: 48px; background: #1e2b37; border-radius: 4px; color: #c3d4e2; font-family: Lato, sans-serif; font-weight: 300; font-size: 16px; letter-spacing: 1.1px; display: flex; align-items: center; justify-content: center; padding-bottom: 2px; }
.btn-draft { width: 87px; }
.btn-submit { width: 99px; }

.scrollbar { width: 22px; flex: none; background: #f1f1f1; border-left: 1px solid #cfcfcf; display: flex; flex-direction: column; align-items: center; padding: 9px 0 7px; }
.arrow-up { width: 0; height: 0; border: 4.5px solid transparent; border-top: 0; border-bottom: 5px solid #505050; flex: none; }
.thumb { width: 17px; height: 457px; background: #c1c1c1; margin-top: 71px; flex: none; }
.arrow-down { width: 0; height: 0; border: 4.5px solid transparent; border-bottom: 0; border-top: 5px solid #505050; margin-top: auto; flex: none; }

/* taskbar */
.taskbar { height: 50px; flex: none; background: #0f0f0f; display: flex; font-family: "Noto Sans", sans-serif; color: #fff; }
.start { width: 60px; display: flex; align-items: center; justify-content: center; flex: none; padding-top: 1px; }
.start svg { width: 20px; height: 20px; }
.search { width: 430px; flex: none; background: #f2f2f2; border-top: 1px solid #bdbdbd; display: flex; align-items: center; color: #333; }
.cortana { width: 26px; height: 26px; border: 4px solid #111; border-radius: 50%; margin-left: 12px; flex: none; }
.search-text { margin-left: 12px; font-size: 17px; letter-spacing: -.2px; white-space: nowrap; }
.mic { width: 14px; height: 22px; margin-left: auto; margin-right: 19px; }
.taskview { width: 58px; flex: none; display: flex; align-items: center; padding-left: 20px; }
.taskview svg { width: 22px; height: 22px; }
.app { height: 50px; flex: none; display: flex; align-items: center; justify-content: center; border-bottom: 3px solid #76b9ed; }
.app-explorer { width: 51px; margin-left: 11px; }
.app-explorer svg { width: 28px; height: 32px; }
.app-chrome { width: 61px; margin-left: 6px; background: linear-gradient(to right, #3c3c3c 56px, #333 56px); }
.chrome-logo { width: 28px; height: 32px; border-radius: 50%; background: conic-gradient(#db4437 0 80deg, #f4c20d 80deg 195deg, #0f9d58 195deg 295deg, #db4437 295deg); display: flex; align-items: center; justify-content: center; margin-right: 5px; }
.chrome-logo::after { content: ""; width: 13px; height: 15px; border-radius: 50%; background: #4285f4; border: 2px solid #fff; }
.app-fz { width: 51px; margin-left: 6px; }
.fz-logo { width: 30px; height: 32px; background: #a00000; color: #fff; font-family: "Liberation Sans", sans-serif; font-weight: bold; font-style: italic; font-size: 24px; line-height: 32px; text-align: center; letter-spacing: -1px; }
.app-je { width: 50px; margin-left: 11px; }
.je-logo { color: #f2a33a; font-family: "Liberation Sans", sans-serif; font-weight: bold; font-size: 19px; letter-spacing: -1px; }
.tray { margin-left: auto; display: flex; padding-right: 20px; height: 50px; align-items: center; }
.slot { display: flex; align-items: center; justify-content: center; flex: none; height: 50px; }
.slot-people { width: 30px; margin-right: 16px; }
.slot-people svg { width: 19px; height: 20px; }
.slot-chev { width: 28px; }
.slot-chev svg { width: 16px; height: 9px; }
.slot-batt { width: 32px; }
.slot-batt svg { width: 20px; height: 12px; }
.slot-wifi { width: 28px; }
.slot-wifi svg { width: 16px; height: 16px; }
.slot-vol { width: 30px; }
.slot-vol svg { width: 18px; height: 12px; }
.slot-eng { width: 46px; font-size: 14px; }
.slot-clock { width: 84px; flex-direction: column; font-size: 14px; line-height: 23px; }
.slot-note { width: 46px; position: relative; }
.slot-note svg { width: 20px; height: 18px; margin-bottom: 4px; }
.note-badge { position: absolute; left: 24px; top: 24px; width: 20px; height: 20px; border-radius: 50%; background: #3c3c3c; border: 1px solid #8a8a8a; font-size: 12px; font-weight: 700; line-height: 18px; text-align: center; }
```
